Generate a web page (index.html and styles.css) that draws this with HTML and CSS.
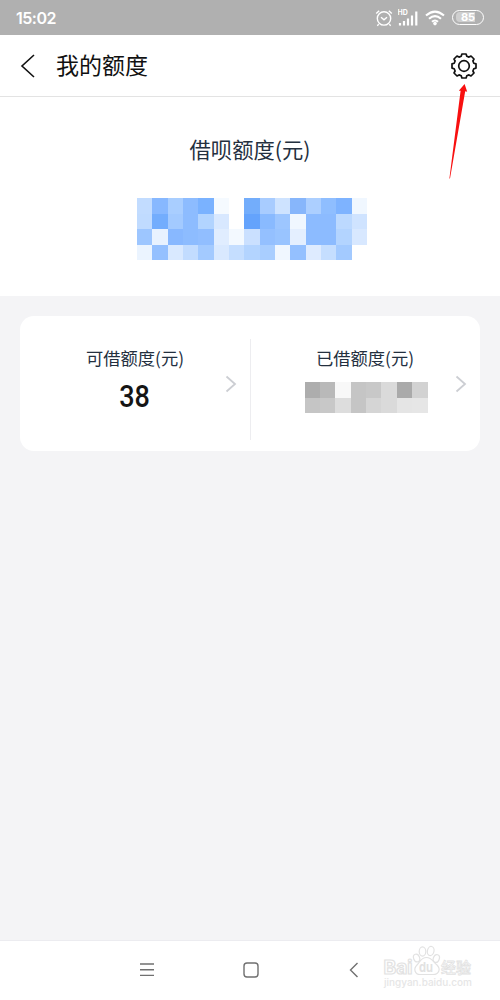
FILE: index.html
```
<!DOCTYPE html>
<html lang="zh-CN">
<head>
  <meta charset="UTF-8">
  <title>我的额度</title>
  <link rel="stylesheet" href="styles.css">
</head>
<body>
  <div class="status-bar">
    <span class="time">15:02</span>
    <div class="status-icons">
      <svg class="alarm" width="18" height="18" viewBox="0 0 18 18">
        <circle cx="9" cy="9.4" r="6.7"/>
        <path d="M1.2 4.5L4.2 1.7M16.8 4.5L13.8 1.7M3.6 15.2L2.4 16.8M14.4 15.2L15.6 16.8M6 8.2L9 10.8L12 8.2"/>
      </svg>
      <svg class="signal" width="20" height="18" viewBox="0 0 20 18">
        <text x="-0.5" y="6.2">HD</text>
        <path d="M2 16.5V14M6 16.5V12M10 16.5V9.5M14 16.5V6.5M18.3 16.5V2.5"/>
      </svg>
      <svg class="wifi" width="20" height="16" viewBox="0 0 20 16">
        <path d="M1 5.5Q10 -2.4 19 5.5M4 8.7Q10 3.5 16 8.7M7 11.8Q10 9.2 13 11.8"/>
        <circle cx="10" cy="13.6" r="1.8"/>
      </svg>
      <span class="battery"><span>85</span></span>
    </div>
  </div>

  <div class="header">
    <svg class="back" width="16" height="24" viewBox="0 0 16 24">
      <path d="M14 1L2 12L14 23"/>
    </svg>
    <h1>我的额度</h1>
    <svg class="gear" width="28" height="28" viewBox="-14 -14 28 28">
      <path d="M-2.1-12H2.1L2.8-9.8L5-8.9L7-10L10-7L8.9-5L9.8-2.8L12-2.1V2.1L9.8 2.8L8.9 5L10 7L7 10L5 8.9L2.8 9.8L2.1 12H-2.1L-2.8 9.8L-5 8.9L-7 10L-10 7L-8.9 5L-9.8 2.8L-12 2.1V-2.1L-9.8-2.8L-8.9-5L-10-7L-7-10L-5-8.9L-2.8-9.8Z"/>
      <circle r="5.3"/>
    </svg>
    <svg class="arrow" width="24" height="96" viewBox="0 0 24 96">
      <path d="M16.6 0L19.2 7.8L17.2 7.2L2 94.5L1.4 94.5L12.6 6.7L10.8 6.8Z"/>
    </svg>
  </div>

  <div class="total">
    <p>借呗额度(元)</p>
    <div class="mosaic blue" id="totalMosaic"></div>
  </div>

  <div class="content">
    <div class="card">
      <div class="item">
        <p>可借额度(元)</p>
        <div class="amount">38</div>
        <svg class="more" width="12" height="18" viewBox="0 0 12 18"><path d="M1.5 1.5L10 9L1.5 16.5"/></svg>
      </div>
      <div class="item">
        <p>已借额度(元)</p>
        <div class="mosaic gray" id="usedMosaic"></div>
        <svg class="more" width="12" height="18" viewBox="0 0 12 18"><path d="M1.5 1.5L10 9L1.5 16.5"/></svg>
      </div>
    </div>
  </div>

  <div class="nav-bar">
    <svg width="16" height="16" viewBox="0 0 16 16"><path d="M1 2H15M1 7.8H15M1 13.4H15"/></svg>
    <svg width="16" height="16" viewBox="0 0 16 16"><rect x="1" y="1" width="14" height="14" rx="3"/></svg>
    <svg width="16" height="16" viewBox="0 0 16 16"><path d="M11.5 1L4.5 8L11.5 15"/></svg>
    <svg class="watermark" width="100" height="50" viewBox="0 0 100 50">
      <g class="paw">
        <ellipse cx="36.600" cy="16" rx="3" ry="4" transform="rotate(-20 36.600 16)"/>
        <ellipse cx="42.500" cy="9.500" rx="3.300" ry="4.600"/>
        <ellipse cx="50.700" cy="9" rx="3.300" ry="4.600" transform="rotate(12 50.700 9)"/>
        <ellipse cx="56.300" cy="16.500" rx="3" ry="4" transform="rotate(20 56.300 16.500)"/>
        <path d="M46.500 15.500C41 15.500 40 20 37 23C33 27 35 32.500 40 32.500H53C59 32.500 61 27 57 23C53 20 52 15.500 46.500 15.500Z"/>
      </g>
      <text class="brand" x="3.500" y="32" textLength="29" lengthAdjust="spacingAndGlyphs">Bai</text>
      <text class="du" x="39" y="30" textLength="14" lengthAdjust="spacingAndGlyphs">du</text>
      <text class="jingyan" x="61" y="31" textLength="30">经验</text>
      <text class="site" x="4" y="44" textLength="88" lengthAdjust="spacingAndGlyphs">jingyan.baidu.com</text>
    </svg>
  </div>

  <script>
    const totalColors = [
      'c2dcff 87b8ff a9ceff 8dbcff 7ab2ff f5faff ffffff 73adfb a8ccff cee3ff 87b6fb accfff 8fbeff 7eb3ff f0f7ff',
      'c0dbff 73adfd a3caff 8dbcff b2d4ff d8e8ff ffffff 64a3fc 89baff 9dc6ff f0f7ff 8cbbff 8cbbff bcd9ff cfe3ff',
      '9dc6ff e8f2ff 88b8ff 8dbcff 91beff e0edff f3f9ff cae0ff 94c0ff 99c4ff e4efff 8cbbff 8cbbff b3d4ff d8e8ff',
      'ebf4ff 94c0ff d9e9ff c2dcff a3caff d9e9ff c5deff b3d4ff a9ceff f0f7ff 94c0ff deebff c5deff a3caff ffffff'
    ];
    const usedColors = [
      'adadad b9b9b9 f8f8f8 c5c5c5 c8c8c8 dadada aaaaaa d2d2d2',
      'c5c5c5 c8c8c8 dddddd c5c5c5 d5d5d5 dadada e5e5e5 e6e6e6'
    ];

    function fillMosaic(id, rows) {
      const box = document.getElementById(id);
      rows.join(' ').split(' ').forEach(color => {
        const cell = document.createElement('i');
        cell.style.backgroundColor = '#' + color;
        box.appendChild(cell);
      });
    }

    fillMosaic('totalMosaic', totalColors);
    fillMosaic('usedMosaic', usedColors);
  </script>
</body>
</html>
```
FILE: styles.css
```
* {
  box-sizing: border-box;
}
body {
  margin: 0;
  height: 1000px;
  display: flex;
  flex-direction: column;
  overflow: hidden;
  background: #f4f4f6;
  font-family: "Noto Sans CJK SC", sans-serif;
}
h1, p {
  margin: 0;
  font-weight: 400;
}
svg {
  fill: none;
  flex-shrink: 0;
}
.status-bar {
  height: 35px;
  padding: 0 16px;
  display: flex;
  justify-content: space-between;
  align-items: center;
  background: #b0b0b0;
  color: #fff;
}
.time {
  font: 600 16px Inter, sans-serif;
  letter-spacing: -0.5px;
}
.status-icons {
  display: flex;
  align-items: center;
  gap: 5px;
  stroke: #fff;
}
.alarm {
  stroke-width: 1.4;
}
.signal {
  stroke-width: 2.2;
}
.signal text {
  font: 700 7px Inter, sans-serif;
  fill: #fff;
  stroke: none;
}
.wifi {
  margin-left: 2px;
  stroke-width: 2.1;
}
.wifi circle {
  fill: #fff;
  stroke: none;
}
.battery {
  width: 32px;
  height: 15px;
  margin-left: 2px;
  padding: 1px 3px;
  border: 1.5px solid #fff;
  border-radius: 8px;
}
.battery span {
  display: block;
  height: 10px;
  border-radius: 4px;
  background: linear-gradient(90deg, #cfcfcf 80%, transparent 80%);
  font: 700 11px/11px Inter, sans-serif;
  text-align: center;
}
.header {
  position: relative;
  height: 62px;
  padding: 0 22px 0 20px;
  display: flex;
  align-items: center;
  background: #fff;
  border-bottom: 1px solid #e3e3e3;
}
.back {
  stroke: #111;
  stroke-width: 1.6;
}
.header h1 {
  flex: 1;
  margin-left: 20px;
  padding-bottom: 3px;
  font-size: 23px;
  line-height: 34px;
  color: #111;
}
.gear {
  stroke: #111;
  stroke-width: 1.7;
  stroke-linejoin: round;
}
.arrow {
  position: absolute;
  left: 448px;
  top: 49px;
  fill: #f81010;
}
.total {
  height: 199px;
  padding-top: 36px;
  display: flex;
  flex-direction: column;
  align-items: center;
  background: #fff;
}
.total p {
  font-size: 21.3px;
  line-height: 32px;
  color: #24303f;
}
.mosaic {
  display: grid;
}
.blue {
  width: 230px;
  height: 62px;
  margin-top: 33px;
  margin-left: 4px;
  grid-template-columns: repeat(15, 1fr);
}
.gray {
  width: 123px;
  height: 31px;
  margin-top: 11px;
  margin-left: 2px;
  grid-template-columns: repeat(8, 1fr);
}
.content {
  flex: 1;
  padding: 20px;
}
.card {
  height: 135px;
  display: flex;
  background: #fff;
  border-radius: 14px;
}
.item {
  position: relative;
  flex: 1;
  padding-top: 29px;
  display: flex;
  flex-direction: column;
  align-items: center;
}
.item + .item::before {
  content: "";
  position: absolute;
  left: 0;
  top: 23px;
  width: 1px;
  height: 101px;
  background: #ededf0;
}
.item p {
  font-size: 17.3px;
  line-height: 26px;
  color: #24303f;
}
.amount {
  margin-top: 7px;
  font: 500 31px/38px Roboto, sans-serif;
  color: #151515;
  transform: scaleX(0.87);
}
.more {
  position: absolute;
  right: 13px;
  top: 59px;
  stroke: #ccced3;
  stroke-width: 1.8;
}
.nav-bar {
  position: relative;
  height: 60px;
  padding: 0 138px 2px 139px;
  display: flex;
  justify-content: space-between;
  align-items: center;
  background: #fff;
  border-top: 1px solid #ececf0;
  stroke: #707070;
  stroke-width: 1.4;
}
.watermark {
  position: absolute;
  left: 380px;
  top: 1px;
  stroke: #e2e2e2;
  stroke-width: 1.2;
}
.watermark text {
  fill: #fff;
}
.brand {
  font: 700 19px Inter, sans-serif;
}
.watermark .du {
  font: 700 13px Inter, sans-serif;
  fill: #e2e2e2;
  stroke: none;
}
.jingyan {
  font: 500 15px "Noto Sans CJK SC", sans-serif;
  stroke-width: 0.8;
}
.watermark .site {
  font: 500 10px Inter, sans-serif;
  fill: #e6e6e6;
  stroke: none;
}
```
